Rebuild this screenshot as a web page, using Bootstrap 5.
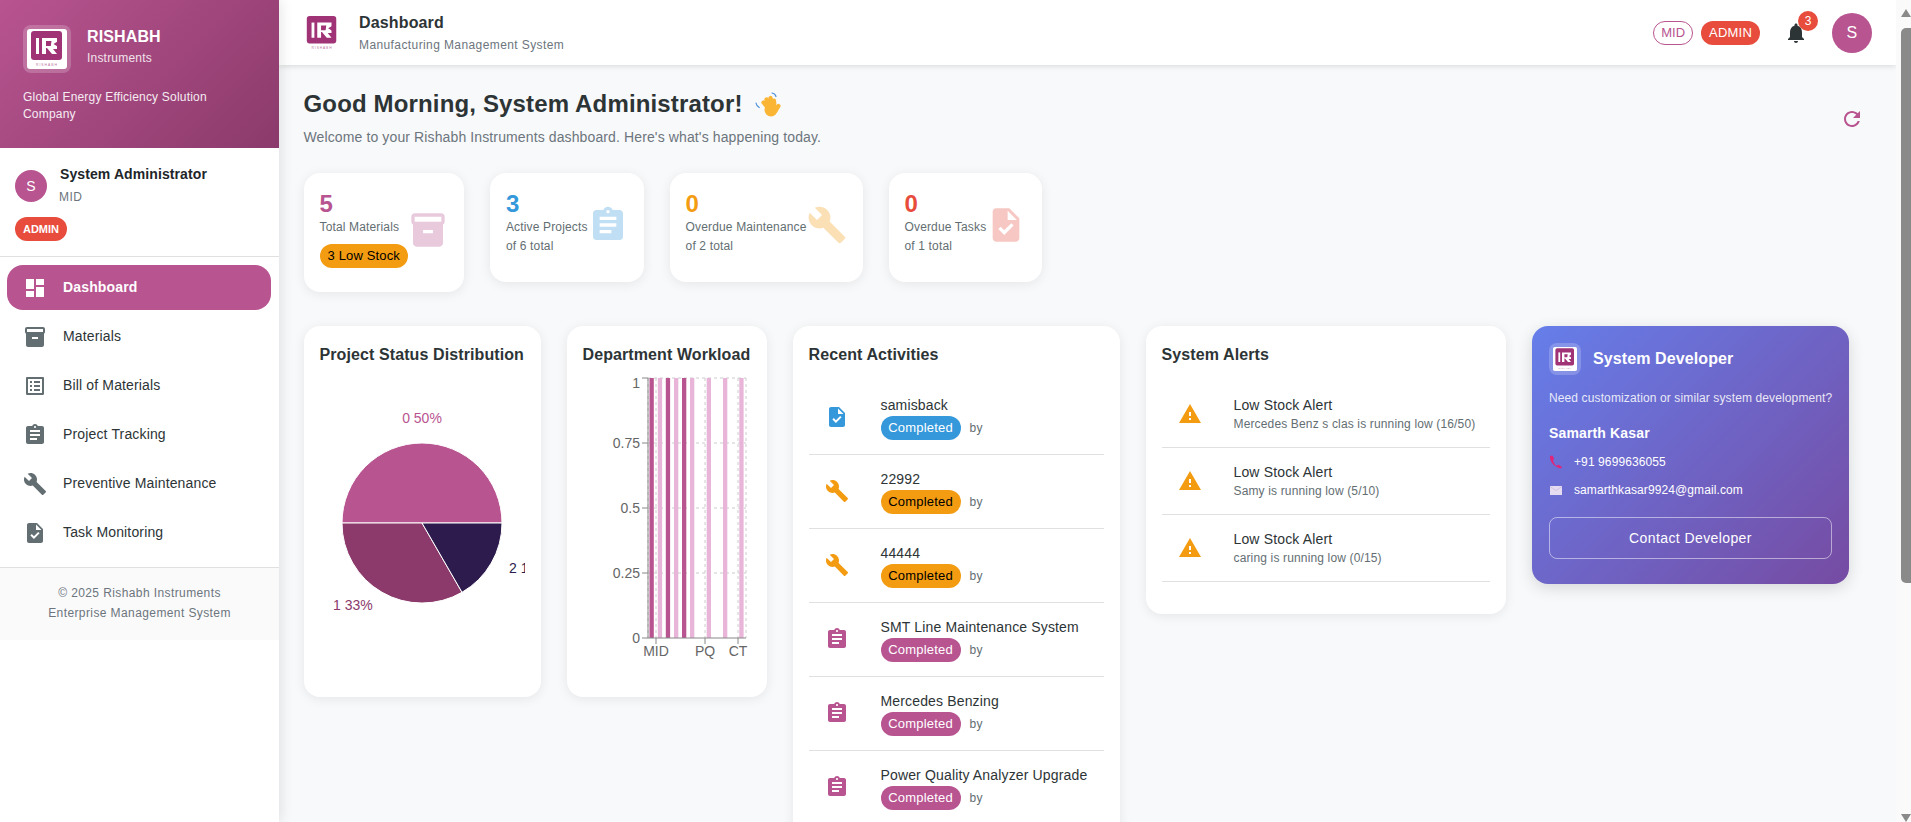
<!DOCTYPE html>
<html lang="en">
<head>
    <meta charset="UTF-8">
    <meta name="viewport" content="width=device-width, initial-scale=1.0">
    <title>Rishabh Instruments - Dashboard</title>
    <link href="https://cdn.jsdelivr.net/npm/bootstrap@5.3.0/dist/css/bootstrap.min.css" rel="stylesheet">
    <style>
        html, body { height: 100%; }
        body {
            font-family: "Liberation Sans", Arial, sans-serif;
            background: #f8f9fa;
            color: #2d3436;
            overflow: hidden;
            letter-spacing: .15px;
        }
        .cap { font-size: 12px; letter-spacing: .4px; }
        .muted-txt { color: #6c757d; }
        .ico { fill: currentColor; flex: none; display: block; }

        /* sidebar */
        .side-rail {
            width: 279px;
            flex: none;
            background: #fff;
            box-shadow: 2px 0 12px rgba(0, 0, 0, .1);
            position: relative;
            z-index: 3;
        }
        .side-head {
            height: 148px;
            padding: 25px 23px 0;
            color: #fff;
            background: linear-gradient(135deg, #b85490 0%, #8b3a6b 100%);
        }
        .logo-box {
            width: 48px;
            height: 48px;
            border-radius: 8px;
            background: rgba(255, 255, 255, .2);
        }
        .brand-name { font-size: 16px; font-weight: 700; line-height: 22px; margin-top: 1px; letter-spacing: .12px; }
        .brand-sub { font-size: 12px; line-height: 20px; opacity: .85; letter-spacing: .2px; }
        .brand-tag { font-size: 12px; line-height: 17px; opacity: .9; margin-top: 16px; letter-spacing: .2px; width: 215px; }
        .side-user { height: 109px; padding: 16px 15px 0; border-bottom: 1px solid #e0e0e0; }
        .user-ava {
            width: 32px;
            height: 32px;
            border-radius: 50%;
            background: #b85490;
            color: #fff;
            font-size: 14px;
            margin-top: 6px;
            margin-right: 13px;
        }
        .user-name { font-size: 14px; font-weight: 700; line-height: 20px; color: #212529; letter-spacing: .1px; }
        .user-dept { line-height: 22px; margin-top: 2px; margin-left: -1px; }
        .pill-red {
            background: #e74c3c;
            color: #fff;
            font-size: 13px;
            font-weight: 400;
            height: 24px;
            line-height: 24px;
            padding: 0 8px;
            border-radius: 12px;
            letter-spacing: .2px;
        }
        .side-user .pill-red { margin-top: 9px; width: 52px; text-align: center; display: block; padding: 0; font-size: 11px; font-weight: 700; letter-spacing: 0; }
        .rail-nav { padding: 8px 8px 0 7px; height: 310px; }
        .rail-link {
            display: flex;
            align-items: center;
            height: 45px;
            margin-bottom: 4px;
            padding: 0 0 0 16px;
            border-radius: 16px;
            color: #2d3436;
            font-size: 14px;
            text-decoration: none;
        }
        .rail-link svg { color: #636e72; margin-right: 16px; }
        .rail-link.on { background: #b85490; color: #fff; font-weight: 700; }
        .rail-link.on svg { color: #fff; }
        .side-foot {
            height: 73px;
            padding-top: 15px;
            background: #fafafa;
            border-top: 1px solid #e0e0e0;
            color: #6c757d;
            line-height: 20px;
            text-align: center;
        }

        /* top bar */
        .main-col { min-width: 0; height: 100vh; overflow: hidden; }
        .top-strip {
            height: 65px;
            padding: 0 24px 0 24px;
            background: #fff;
            box-shadow: 0 1px 6px rgba(0, 0, 0, .14);
            position: relative;
            z-index: 2;
        }
        .top-text { margin-left: 18px; }
        .top-title { font-size: 16px; font-weight: 700; line-height: 22px; margin-top: 2px; color: #2d3436; }
        .top-sub { line-height: 20px; margin-top: 1px; }
        .pill-line {
            height: 24px;
            line-height: 22px;
            padding: 0 7px;
            border: 1px solid #b85490;
            border-radius: 12px;
            color: #b85490;
            font-size: 13px;
            background: #fff;
            letter-spacing: .05px;
        }
        .bell-wrap { width: 40px; height: 40px; color: #2d3436; }
        .bell-count {
            position: absolute;
            top: -2px;
            right: -2px;
            width: 20px;
            height: 20px;
            border-radius: 50%;
            background: #e74c3c;
            color: #fff;
            font-size: 12px;
            line-height: 20px;
            text-align: center;
            letter-spacing: 0;
        }
        .top-ava {
            width: 40px;
            height: 40px;
            border-radius: 50%;
            background: #b85490;
            color: #fff;
            font-size: 16px;
        }

        /* content */
        .page-body { padding: 24px 24px 0 24.5px; }
        .hello { font-size: 24px; font-weight: 700; line-height: 29px; color: #2d3436; margin: 0; letter-spacing: .15px; }
        .hello-wave { margin-left: 10px; }
        .hello-sub { font-size: 14px; line-height: 20px; margin: 9px 0 0; letter-spacing: .12px; }
        .refresh-ico { margin: 18px 8px 0 0; }
        .stat-row { margin-top: 26px; gap: 26px; }
        .soft-card {
            background: #fff;
            border: 0;
            border-radius: 16px;
            box-shadow: 0 2px 12px rgba(0, 0, 0, .08);
        }
        .stat-box { padding: 17px 16px 23px; }
        .stat-num { font-size: 24px; font-weight: 700; line-height: 27px; letter-spacing: 0; }
        .stat-line { line-height: 20px; color: #636e72; white-space: nowrap; letter-spacing: .15px; }
        .stat-end { padding-bottom: 3px; margin-top: -1px; }
        .stat-ico { opacity: .3; }
        .pill-amber {
            display: block;
            width: fit-content;
            margin: 7px 0 1px;
            background: #f39c12;
            color: #000;
            font-size: 13px;
            font-weight: 400;
            height: 24px;
            line-height: 24px;
            padding: 0 8px;
            border-radius: 12px;
            letter-spacing: .15px;
        }
        .tint-main { color: #b85490; }
        .tint-blue { color: #3498db; }
        .tint-amber { color: #f39c12; }
        .tint-red { color: #e74c3c; }
        .cards-row { margin-top: 34px; gap: 26px; }
        .w-pie { width: 237px; height: 371px; }
        .w-bars { width: 200px; height: 371px; }
        .w-act { width: 327px; height: 560px; }
        .w-alert { width: 360.5px; height: 288px; }
        .w-dev { width: 317px; height: 258px; }
        .panel-title { font-size: 16px; font-weight: 700; line-height: 24px; color: #2d3436; margin: 17px 16px 0; letter-spacing: .1px; white-space: nowrap; }
        .chart-svg { display: block; margin: 3px 0 0 16px; font-family: "Liberation Sans", Arial, sans-serif; letter-spacing: 0; }
        .feed { margin: 14px 16px 0; }
        .feed-row { display: flex; border-bottom: 1px solid #e0e0e0; padding-left: 16px; height: 74px; }
        .feed-ico { width: 56px; flex: none; padding-top: 24px; }
        .feed-name { font-size: 14px; line-height: 21px; padding-top: 14px; color: #2d3436; white-space: nowrap; }
        .feed-meta { display: flex; align-items: center; }
        .feed-pill {
            display: block;
            width: 80px;
            height: 24px;
            line-height: 24px;
            border-radius: 12px;
            font-size: 13px;
            font-weight: 400;
            text-align: center;
            letter-spacing: .2px;
            color: #fff;
        }
        .feed-pill.fill-amber { background: #f39c12; color: #000; }
        .feed-pill.fill-blue { background: #3498db; }
        .feed-pill.fill-main { background: #b85490; }
        .feed-by { font-size: 12px; color: #636e72; margin-left: 9px; letter-spacing: .4px; }
        .alert-row { height: 67px; }
        .alert-row .feed-ico { padding-top: 21px; }
        .alert-note { line-height: 17px; color: #636e72; letter-spacing: .15px; white-space: nowrap; }
        .dev-card {
            border: 0;
            border-radius: 16px;
            padding: 17px;
            color: #fff;
            background: linear-gradient(135deg, #667eea 0%, #764ba2 100%);
            box-shadow: 0 4px 16px rgba(0, 0, 0, .14);
        }
        .dev-logo { width: 32px; height: 32px; border-radius: 8px; background: rgba(255, 255, 255, .2); }
        .dev-title { font-size: 16px; font-weight: 700; letter-spacing: .1px; }
        .dev-ask { font-size: 12px; line-height: 17px; opacity: .85; margin-top: 15px; letter-spacing: .12px; white-space: nowrap; }
        .dev-name { font-size: 14px; font-weight: 700; line-height: 20px; margin-top: 16px; }
        .dev-line { font-size: 12px; line-height: 18px; margin-top: 10px; letter-spacing: .1px; }
        .dev-line svg { margin-right: 11px; }
        .dev-btn {
            display: block;
            width: 100%;
            height: 42px;
            margin-top: 18px;
            font-size: 14px;
            letter-spacing: .4px;
            color: #fff;
            background: transparent;
            border: 1px solid rgba(255, 255, 255, .5);
            border-radius: 8px;
        }

        /* scrollbar column */
        .fake-bar { width: 15px; flex: none; height: 100vh; background: #fafafa; padding-left: 5px; }
        .bar-thumb { height: 555px; width: 10px; border-radius: 5px 0 0 5px; background: #8a8a8a; margin-top: 10px; }
        .bar-arrow { display: block; margin-top: 8px; }
        .bar-arrow.down { margin-top: 230px; }
    </style>
</head>
<body class="d-flex">
    <svg width="0" height="0" class="position-absolute">
        <symbol id="rb-logo" viewBox="0 0 40 40">
            <rect width="40" height="40" rx="3" fill="#fff"/>
            <rect x="4" y="2" width="31" height="29" rx="3" fill="#a03376"/>
            <rect x="9" y="9" width="3" height="16" fill="#fff"/>
            <path d="M15 9h15v11h-4l4 5h-5l-5-6h-1v6h-4z" fill="#fff"/>
            <path d="M19 12h5.500l-.7 5H19zM30.500 12.500l-4 2.500 4 2.500z" fill="#a03376"/>
            <text x="20" y="36.5" font-size="3.400" text-anchor="middle" fill="#a03376" opacity=".7" letter-spacing="1">RISHABH</text>
        </symbol>
        <symbol id="i-dash" viewBox="0 0 24 24"><path d="M3 13h8V3H3v10zm0 8h8v-6H3v6zm10 0h8V11h-8v10zm0-18v6h8V3h-8z"/></symbol>
        <symbol id="i-box" viewBox="0 0 24 24"><path d="M20 2H4c-1 0-2 .9-2 2v3.01c0 .72.43 1.34 1 1.69V20c0 1.1 1.1 2 2 2h14c.9 0 2-.9 2-2V8.7c.57-.35 1-.97 1-1.69V4c0-1.1-1-2-2-2zm-5 12H9v-2h6v2zm5-7H4V4l16-.02V7z"/></symbol>
        <symbol id="i-list" viewBox="0 0 24 24"><path d="M19 5v14H5V5h14m1.1-2H3.9c-.5 0-.9.4-.9.9v16.2c0 .4.4.9.9.9h16.2c.4 0 .9-.5.9-.9V3.9c0-.5-.5-.9-.9-.9zM11 7h6v2h-6V7zm0 4h6v2h-6v-2zm0 4h6v2h-6zM7 7h2v2H7zm0 4h2v2H7zm0 4h2v2H7z"/></symbol>
        <symbol id="i-clip" viewBox="0 0 24 24"><path d="M19 3h-4.18C14.4 1.84 13.3 1 12 1c-1.3 0-2.4.84-2.82 2H5c-1.1 0-2 .9-2 2v14c0 1.1.9 2 2 2h14c1.1 0 2-.9 2-2V5c0-1.1-.9-2-2-2zm-7 0c.55 0 1 .45 1 1s-.45 1-1 1-1-.45-1-1 .45-1 1-1zm2 14H7v-2h7v2zm3-4H7v-2h10v2zm0-4H7V7h10v2z"/></symbol>
        <symbol id="i-wrench" viewBox="0 0 24 24"><path d="M22.7 19l-9.1-9.1c.9-2.3.4-5-1.5-6.9-2-2-5-2.4-7.4-1.3L9 6 6 9 1.6 4.7C.4 7.1.9 10.1 2.9 12.1c1.9 1.9 4.6 2.4 6.9 1.5l9.1 9.1c.4.4 1 .4 1.4 0l2.3-2.3c.5-.4.5-1.1.1-1.4z"/></symbol>
        <symbol id="i-task" viewBox="0 0 24 24"><path d="M14 2H6c-1.1 0-1.99.9-1.99 2L4 20c0 1.1.89 2 1.99 2H18c1.1 0 2-.9 2-2V8l-6-6zm-3.06 16L7.4 14.46l1.41-1.41 2.12 2.12 4.24-4.24 1.41 1.41L10.94 18zM13 9V3.5L18.5 9H13z"/></symbol>
        <symbol id="i-warn" viewBox="0 0 24 24"><path d="M1 21h22L12 2 1 21zm12-3h-2v-2h2v2zm0-4h-2v-4h2v4z"/></symbol>
        <symbol id="i-bell" viewBox="0 0 24 24"><path d="M12 22c1.1 0 2-.9 2-2h-4c0 1.1.89 2 2 2zm6-6v-5c0-3.07-1.64-5.64-4.5-6.32V4c0-.83-.67-1.5-1.5-1.5s-1.5.67-1.5 1.5v.68C7.63 5.36 6 7.92 6 11v5l-2 2v1h16v-1l-2-2z"/></symbol>
        <symbol id="i-refresh" viewBox="0 0 24 24"><path d="M17.65 6.35C16.2 4.9 14.21 4 12 4c-4.42 0-7.99 3.58-7.99 8s3.57 8 7.99 8c3.73 0 6.84-2.55 7.73-6h-2.08c-.82 2.33-3.04 4-5.65 4-3.31 0-6-2.69-6-6s2.69-6 6-6c1.66 0 3.14.69 4.22 1.78L13 11h7V4l-2.35 2.35z"/></symbol>
    </svg>

    <aside class="side-rail d-flex flex-column">
        <div class="side-head">
            <div class="d-flex gap-3">
                <div class="logo-box d-flex align-items-center justify-content-center">
                    <svg width="40" height="40"><use href="#rb-logo"/></svg>
                </div>
                <div>
                    <div class="brand-name">RISHABH</div>
                    <div class="brand-sub">Instruments</div>
                </div>
            </div>
            <div class="brand-tag">Global Energy Efficiency Solution Company</div>
        </div>
        <div class="side-user">
            <div class="d-flex">
                <div class="user-ava d-flex align-items-center justify-content-center">S</div>
                <div>
                    <div class="user-name">System Administrator</div>
                    <div class="user-dept cap muted-txt">MID</div>
                </div>
            </div>
            <span class="pill-red">ADMIN</span>
        </div>
        <nav class="rail-nav nav flex-column">
            <a class="rail-link on" href="#"><svg class="ico" width="24" height="24"><use href="#i-dash"/></svg>Dashboard</a>
            <a class="rail-link" href="#"><svg class="ico" width="24" height="24"><use href="#i-box"/></svg>Materials</a>
            <a class="rail-link" href="#"><svg class="ico" width="24" height="24"><use href="#i-list"/></svg>Bill of Materials</a>
            <a class="rail-link" href="#"><svg class="ico" width="24" height="24"><use href="#i-clip"/></svg>Project Tracking</a>
            <a class="rail-link" href="#"><svg class="ico" width="24" height="24"><use href="#i-wrench"/></svg>Preventive Maintenance</a>
            <a class="rail-link" href="#"><svg class="ico" width="24" height="24"><use href="#i-task"/></svg>Task Monitoring</a>
        </nav>
        <div class="side-foot cap">
            <div>© 2025 Rishabh Instruments</div>
            <div>Enterprise Management System</div>
        </div>
    </aside>

    <div class="main-col flex-grow-1 d-flex flex-column">
        <header class="top-strip d-flex align-items-center flex-shrink-0">
            <svg class="flex-shrink-0" width="38" height="38"><use href="#rb-logo"/></svg>
            <div class="flex-grow-1 top-text">
                <div class="top-title">Dashboard</div>
                <div class="top-sub cap muted-txt">Manufacturing Management System</div>
            </div>
            <div class="d-flex align-items-center gap-2 me-3">
                <span class="pill-line">MID</span>
                <span class="pill-red">ADMIN</span>
            </div>
            <div class="bell-wrap position-relative d-flex align-items-center justify-content-center me-3">
                <svg class="ico" width="24" height="24"><use href="#i-bell"/></svg>
                <span class="bell-count">3</span>
            </div>
            <div class="top-ava d-flex align-items-center justify-content-center">S</div>
        </header>

        <main class="page-body">
            <div class="d-flex justify-content-between">
                <div>
                    <h1 class="hello d-flex align-items-center">Good Morning, System Administrator!
                        <svg class="hello-wave" width="28" height="28" viewBox="0 0 28 28">
                            <g fill="none" stroke="#fbb534" stroke-width="4.200" stroke-linecap="round">
                                <path d="M16 19L10.500 12.500M17 18L13.500 9.500M19.500 17L17.500 8M21.500 18L21 10.500M22.500 21L25.500 16"/>
                            </g>
                            <circle cx="18" cy="20" r="6.500" fill="#fbb534"/>
                            <path d="M19 3c2 .3 3.500 1.500 4 3.500M3 13c.3 2 1.300 3.500 3.200 4.500" fill="none" stroke="#4a90d9" stroke-width="1.200" stroke-linecap="round"/>
                        </svg>
                    </h1>
                    <p class="hello-sub muted-txt">Welcome to your Rishabh Instruments dashboard. Here's what's happening today.</p>
                </div>
                <svg class="ico tint-main refresh-ico" width="24" height="24"><use href="#i-refresh"/></svg>
            </div>

            <div class="stat-row d-flex align-items-start">
                <div class="soft-card stat-box d-flex align-items-center">
                    <div>
                        <div class="stat-num tint-main">5</div>
                        <div class="stat-line cap">Total Materials</div>
                        <span class="pill-amber">3 Low Stock</span>
                    </div>
                    <svg class="ico stat-ico tint-main" width="40" height="40"><use href="#i-box"/></svg>
                </div>
                <div class="soft-card stat-box d-flex align-items-center">
                    <div>
                        <div class="stat-num tint-blue">3</div>
                        <div class="stat-line cap">Active Projects</div>
                        <div class="stat-line stat-end cap">of 6 total</div>
                    </div>
                    <svg class="ico stat-ico tint-blue" width="40" height="40"><use href="#i-clip"/></svg>
                </div>
                <div class="soft-card stat-box d-flex align-items-center">
                    <div>
                        <div class="stat-num tint-amber">0</div>
                        <div class="stat-line cap">Overdue Maintenance</div>
                        <div class="stat-line stat-end cap">of 2 total</div>
                    </div>
                    <svg class="ico stat-ico tint-amber" width="40" height="40"><use href="#i-wrench"/></svg>
                </div>
                <div class="soft-card stat-box d-flex align-items-center">
                    <div>
                        <div class="stat-num tint-red">0</div>
                        <div class="stat-line cap">Overdue Tasks</div>
                        <div class="stat-line stat-end cap">of 1 total</div>
                    </div>
                    <svg class="ico stat-ico tint-red" width="40" height="40"><use href="#i-task"/></svg>
                </div>
            </div>

            <div class="cards-row d-flex align-items-start">
                <section class="soft-card w-pie flex-shrink-0">
                    <h2 class="panel-title">Project Status Distribution</h2>
                    <svg class="chart-svg" width="205" height="300" viewBox="320 370 205 300" font-size="14">
                        <path d="M422 523L502 523A80 80 0 0 0 342 523Z" fill="#b85490" stroke="#fff"/>
                        <path d="M422 523L342 523A80 80 0 0 0 462 592.300Z" fill="#8b3a6b" stroke="#fff"/>
                        <path d="M422 523L462 592.300A80 80 0 0 0 502 523Z" fill="#2d1b4e" stroke="#fff"/>
                        <text x="422" y="423" text-anchor="middle" fill="#b85490">0 50%</text>
                        <text x="333" y="610" fill="#8b3a6b">1 33%</text>
                        <text x="509" y="573" fill="#2d1b4e">2 17%</text>
                    </svg>
                </section>
                <section class="soft-card w-bars flex-shrink-0">
                    <h2 class="panel-title">Department Workload</h2>
                    <svg class="chart-svg" width="168" height="300" viewBox="583 370 168 300" font-size="14" fill="#666">
                        <g stroke="#ccc" stroke-dasharray="3 3">
                            <path d="M648 378H746M648 443H746M648 508H746M648 573H746"/>
                            <path d="M648 378V638M656 378V638M705 378V638M738 378V638M746 378V638"/>
                        </g>
                        <g fill="#b85490">
                            <rect x="649.500" y="378" width="4.300" height="260"/>
                            <rect x="665.800" y="378" width="4.300" height="260"/>
                            <rect x="682" y="378" width="4.300" height="260"/>
                        </g>
                        <g fill="#e8b4d8">
                            <rect x="657.800" y="378" width="4.300" height="260"/>
                            <rect x="674" y="378" width="4.300" height="260"/>
                            <rect x="690" y="378" width="4.300" height="260"/>
                            <rect x="706.700" y="378" width="4.300" height="260"/>
                            <rect x="723" y="378" width="4.300" height="260"/>
                            <rect x="739.300" y="378" width="4.300" height="260"/>
                        </g>
                        <path d="M648 378V638H746M642 378H648M642 443H648M642 508H648M642 573H648M642 638H648M656 638V644M705 638V644M738 638V644" fill="none" stroke="#888"/>
                        <g text-anchor="end">
                            <text x="640" y="388">1</text>
                            <text x="640" y="448">0.75</text>
                            <text x="640" y="513">0.5</text>
                            <text x="640" y="578">0.25</text>
                            <text x="640" y="643">0</text>
                        </g>
                        <g text-anchor="middle">
                            <text x="656" y="656">MID</text>
                            <text x="705" y="656">PQ</text>
                            <text x="738" y="656">CT</text>
                        </g>
                    </svg>
                </section>
                <section class="soft-card w-act flex-shrink-0">
                    <h2 class="panel-title">Recent Activities</h2>
                    <div class="feed">
                        <div class="feed-row">
                            <div class="feed-ico tint-blue"><svg class="ico" width="24" height="24"><use href="#i-task"/></svg></div>
                            <div><div class="feed-name">samisback</div><div class="feed-meta"><span class="feed-pill fill-blue">Completed</span><span class="feed-by">by</span></div></div>
                        </div>
                        <div class="feed-row">
                            <div class="feed-ico tint-amber"><svg class="ico" width="24" height="24"><use href="#i-wrench"/></svg></div>
                            <div><div class="feed-name">22992</div><div class="feed-meta"><span class="feed-pill fill-amber">Completed</span><span class="feed-by">by</span></div></div>
                        </div>
                        <div class="feed-row">
                            <div class="feed-ico tint-amber"><svg class="ico" width="24" height="24"><use href="#i-wrench"/></svg></div>
                            <div><div class="feed-name">44444</div><div class="feed-meta"><span class="feed-pill fill-amber">Completed</span><span class="feed-by">by</span></div></div>
                        </div>
                        <div class="feed-row">
                            <div class="feed-ico tint-main"><svg class="ico" width="24" height="24"><use href="#i-clip"/></svg></div>
                            <div><div class="feed-name">SMT Line Maintenance System</div><div class="feed-meta"><span class="feed-pill fill-main">Completed</span><span class="feed-by">by</span></div></div>
                        </div>
                        <div class="feed-row">
                            <div class="feed-ico tint-main"><svg class="ico" width="24" height="24"><use href="#i-clip"/></svg></div>
                            <div><div class="feed-name">Mercedes Benzing</div><div class="feed-meta"><span class="feed-pill fill-main">Completed</span><span class="feed-by">by</span></div></div>
                        </div>
                        <div class="feed-row">
                            <div class="feed-ico tint-main"><svg class="ico" width="24" height="24"><use href="#i-clip"/></svg></div>
                            <div><div class="feed-name">Power Quality Analyzer Upgrade</div><div class="feed-meta"><span class="feed-pill fill-main">Completed</span><span class="feed-by">by</span></div></div>
                        </div>
                    </div>
                </section>
                <section class="soft-card w-alert flex-shrink-0">
                    <h2 class="panel-title">System Alerts</h2>
                    <div class="feed">
                        <div class="feed-row alert-row">
                            <div class="feed-ico tint-amber"><svg class="ico" width="24" height="24"><use href="#i-warn"/></svg></div>
                            <div><div class="feed-name">Low Stock Alert</div><div class="alert-note cap">Mercedes Benz s clas is running low (16/50)</div></div>
                        </div>
                        <div class="feed-row alert-row">
                            <div class="feed-ico tint-amber"><svg class="ico" width="24" height="24"><use href="#i-warn"/></svg></div>
                            <div><div class="feed-name">Low Stock Alert</div><div class="alert-note cap">Samy is running low (5/10)</div></div>
                        </div>
                        <div class="feed-row alert-row">
                            <div class="feed-ico tint-amber"><svg class="ico" width="24" height="24"><use href="#i-warn"/></svg></div>
                            <div><div class="feed-name">Low Stock Alert</div><div class="alert-note cap">caring is running low (0/15)</div></div>
                        </div>
                    </div>
                </section>
                <section class="dev-card w-dev flex-shrink-0">
                    <div class="d-flex align-items-center gap-2">
                        <div class="dev-logo d-flex align-items-center justify-content-center me-1">
                            <svg width="24" height="24"><use href="#rb-logo"/></svg>
                        </div>
                        <div class="dev-title">System Developer</div>
                    </div>
                    <div class="dev-ask">Need customization or similar system development?</div>
                    <div class="dev-name">Samarth Kasar</div>
                    <div class="dev-line d-flex align-items-center">
                        <svg width="14" height="14" viewBox="0 0 14 14"><path d="M1 1c-.6 5 3.500 11 11 12.500l1-1.500c-1.500-1.200-3-2-4.200-2.300L7.500 11C5.500 9.500 4.300 7 4 5l1.200-1C4.800 2.700 4.200 1.500 3.400.5z" fill="#e0247a"/></svg>
                        <span>+91 9699636055</span>
                    </div>
                    <div class="dev-line d-flex align-items-center">
                        <svg width="14" height="14" viewBox="0 0 14 14"><rect x="1" y="3" width="12" height="9" fill="#e6dcf2"/><path d="M1 3.500l6 4 6-4" fill="none" stroke="#c9bce0" stroke-width=".8"/></svg>
                        <span>samarthkasar9924@gmail.com</span>
                    </div>
                    <button class="dev-btn" type="button">Contact Developer</button>
                </section>
            </div>
        </main>
    </div>

    <div class="fake-bar">
        <svg class="bar-arrow" width="10" height="10" viewBox="0 0 10 10"><path d="M5 1l5 8H0z" fill="#8a8a8a"/></svg>
        <div class="bar-thumb"></div>
        <svg class="bar-arrow down" width="10" height="10" viewBox="0 0 10 10"><path d="M5 9l5-8H0z" fill="#8a8a8a"/></svg>
    </div>
</body>
</html>
